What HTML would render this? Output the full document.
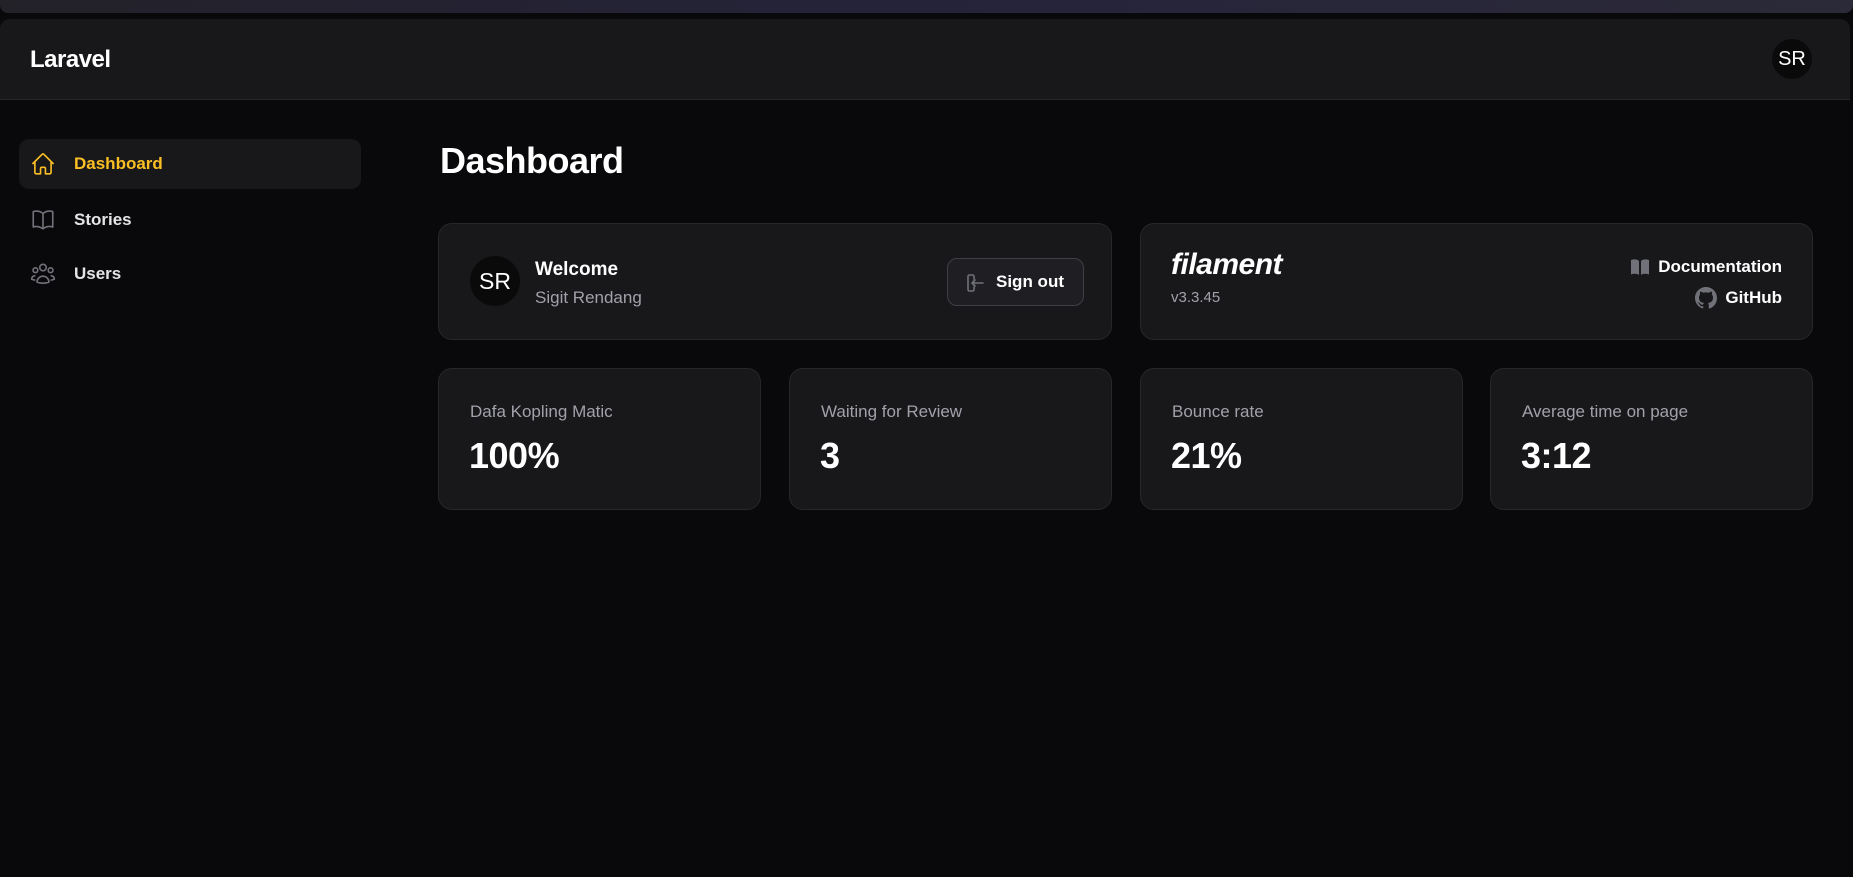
<!DOCTYPE html>
<html><head><meta charset="utf-8"><style>
*{box-sizing:border-box;margin:0;padding:0}
body{width:1853px;height:877px;background:#09090b;font-family:"Liberation Sans",sans-serif;color:#fff;position:relative;overflow:hidden}
.strip{position:absolute;left:0;top:0;width:1853px;height:13px;background:linear-gradient(90deg,#232229,#25233a 50%,#2b2a38);border-radius:0 0 8px 8px}
.top{position:absolute;left:0;top:19px;width:1850px;height:81px;background:#18181b;border-bottom:1px solid #27272a;border-radius:10px 10px 0 0}
.logo{position:absolute;left:30px;top:27px;font-size:24px;font-weight:bold;letter-spacing:-0.5px}
.av{position:absolute;border-radius:50%;background:#0a0a0b;color:#fff;display:flex;align-items:center;justify-content:center;font-family:"Liberation Sans Narrow","Liberation Sans",sans-serif}
.nav{position:absolute;left:19px;width:342px;height:50px;border-radius:10px;display:flex;align-items:center;font-size:17px;font-weight:bold;color:#e4e4e7}
.nav svg{position:absolute;left:11px}
.nav span{position:absolute;left:55px}
h1{position:absolute;left:440px;top:140px;font-size:36px;font-weight:bold;letter-spacing:-0.5px}
.card{position:absolute;background:#18181b;border:1px solid #27272a;border-radius:14px}
.lbl{position:absolute;left:31px;top:33px;font-size:17px;color:#a1a1aa}
.val{position:absolute;left:30px;top:66px;font-size:36px;font-weight:bold;letter-spacing:-0.5px}
</style></head><body>
<div class="strip"></div>
<div class="top"><div class="logo">Laravel</div>
<div class="av" style="left:1772px;top:20px;width:40px;height:40px;font-size:20px">SR</div></div>

<div class="nav" style="top:139px;background:#18181b;color:#fbbf24">
<svg width="26" height="26" viewBox="0 0 24 24" fill="none" stroke="#fbbf24" stroke-width="1.5" stroke-linejoin="round"><path d="M2.25 12 11.2 3.05a1.1 1.1 0 0 1 1.6 0L21.75 12M4.5 9.75v10.1c0 .6.5 1.15 1.1 1.15H9.75v-4.9c0-.6.5-1.1 1.1-1.1h2.3c.6 0 1.1.5 1.1 1.1V21h4.1c.6 0 1.1-.5 1.1-1.1V9.75"/></svg>
<span>Dashboard</span></div>
<div class="nav" style="top:195px">
<svg width="26" height="26" viewBox="0 0 24 24" fill="none" stroke="#71717a" stroke-width="1.5" stroke-linejoin="round"><path d="M12 6.04A8.97 8.97 0 0 0 6 3.75c-1.05 0-2.06.18-3 .51v14.25A8.99 8.99 0 0 1 6 18c2.3 0 4.4.87 6 2.29m0-14.25a8.970 8.97 0 0 1 6-2.29c1.05 0 2.06.18 3 .51v14.25A8.99 8.99 0 0 0 18 18a8.97 8.97 0 0 0-6 2.29m0-14.25v14.25"/></svg>
<span>Stories</span></div>
<div class="nav" style="top:249px">
<svg width="26" height="26" viewBox="0 0 24 24" fill="none" stroke="#71717a" stroke-width="1.5" stroke-linejoin="round"><circle cx="12" cy="6" r="3"/><circle cx="5" cy="8.5" r="2.2"/><circle cx="19" cy="8.5" r="2.2"/><path d="M6.5 19.5a5.5 5.5 0 0 1 11 0c-3.5 1.3-7.5 1.3-11 0zM5 13.5c-2 0-3.3 1.3-3.5 3.3 1 .5 2.2.8 3.5.8M19 13.5c2 0 3.3 1.3 3.5 3.3-1 .5-2.2.8-3.5.8"/></svg>
<span>Users</span></div>

<h1>Dashboard</h1>

<div class="card" style="left:438px;top:223px;width:674px;height:117px">
<div class="av" style="left:31px;top:32px;width:50px;height:50px;font-size:23px">SR</div>
<div style="position:absolute;left:96px;top:35px;font-size:19px;font-weight:bold">Welcome</div>
<div style="position:absolute;left:96px;top:64px;font-size:17px;color:#a1a1aa">Sigit Rendang</div>
<div style="position:absolute;left:508px;top:34px;width:137px;height:48px;border:1px solid #3f3f46;border-radius:10px;background:#1f1f23">
<svg style="position:absolute;left:15px;top:12px" width="24" height="24" viewBox="0 0 24 24" fill="none" stroke="#71717a" stroke-width="1.6" stroke-linecap="round" stroke-linejoin="round"><path d="M11 8V5.5A1.5 1.5 0 0 0 9.5 4h-3A1.5 1.5 0 0 0 5 5.5v13A1.5 1.5 0 0 0 6.5 20h3a1.5 1.5 0 0 0 1.5-1.5V16"/><path d="M20 12H9m3-3-3 3 3 3"/></svg>
<div style="position:absolute;left:48px;top:13px;font-size:17px;font-weight:bold">Sign out</div></div>
</div>

<div class="card" style="left:1140px;top:223px;width:673px;height:117px">
<div style="position:absolute;left:30px;top:24px;font-size:30px;font-weight:bold;font-style:italic;letter-spacing:-0.5px">filament</div>
<div style="position:absolute;left:30px;top:65px;font-size:15px;color:#a1a1aa">v3.3.45</div>
<div style="position:absolute;right:30px;top:33px;font-size:17px;font-weight:bold;display:flex;align-items:center;gap:8px">
<svg width="20" height="18" viewBox="0 0 20 18"><path d="M1 2c3-1 6-1 8 1v14c-2-1.5-5-1.5-8-.5zM11 3c2-2 5-2 8-1v14.5c-3-1-6-1-8 .5z" fill="#71717a"/></svg>Documentation</div>
<div style="position:absolute;right:30px;top:63px;font-size:17px;font-weight:bold;display:flex;align-items:center;gap:8px">
<svg width="22" height="22" viewBox="0 0 16 16"><path fill="#71717a" d="M8 0C3.58 0 0 3.580 0 8c0 3.54 2.29 6.53 5.47 7.59.4.07.55-.17.55-.38v-1.33c-2.23.48-2.7-1.07-2.7-1.07-.36-.92-.89-1.17-.89-1.17-.73-.5.06-.49.06-.49.8.06 1.23.83 1.23.83.71 1.22 1.87.87 2.33.66.07-.52.28-.87.5-1.07-1.78-.2-3.64-.89-3.64-3.95 0-.87.31-1.59.82-2.15-.08-.2-.36-1.02.08-2.12 0 0 .67-.21 2.2.82a7.6 7.6 0 0 1 4 0c1.53-1.04 2.2-.82 2.2-.82.44 1.1.16 1.92.08 2.12.51.56.82 1.27.82 2.15 0 3.07-1.87 3.75-3.65 3.95.29.25.54.73.54 1.48v2.2c0 .21.15.46.55.38A8.01 8.01 0 0 0 16 8c0-4.42-3.58-8-8-8z"/></svg>GitHub</div>
</div>

<div class="card" style="left:438px;top:368px;width:323px;height:142px"><div class="lbl">Dafa Kopling Matic</div><div class="val">100%</div></div>
<div class="card" style="left:789px;top:368px;width:323px;height:142px"><div class="lbl">Waiting for Review</div><div class="val">3</div></div>
<div class="card" style="left:1140px;top:368px;width:323px;height:142px"><div class="lbl">Bounce rate</div><div class="val">21%</div></div>
<div class="card" style="left:1490px;top:368px;width:323px;height:142px"><div class="lbl">Average time on page</div><div class="val">3:12</div></div>
</body></html>
